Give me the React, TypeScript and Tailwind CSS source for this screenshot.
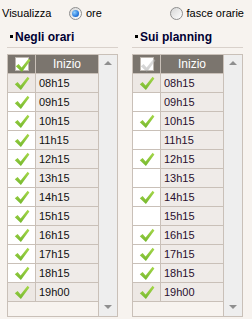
const TIMES = ['08h15', '09h15', '10h15', '11h15', '12h15', '13h15', '14h15', '15h15', '16h15', '17h15', '18h15', '19h00'];
const RIGHT_CHECKED = [true, false, true, false, true, false, true, false, true, true, true, true];

function Tick({ className = '' }: { className?: string }) {
  return (
    <svg width="16" height="15" viewBox="0 0 16 15" className={className}>
      <defs>
        <linearGradient id="tickg" x1="0" y1="0" x2="0" y2="1">
          <stop offset="0" stopColor="#a6d84a" />
          <stop offset="1" stopColor="#74b72e" />
        </linearGradient>
      </defs>
      <path d="M0.8 8.2 L3.6 6 L6.6 9.4 L13.6 0.8 L15.4 2.6 L6.9 14 Z" fill="url(#tickg)" />
    </svg>
  );
}

function Radio({ checked }: { checked: boolean }) {
  return (
    <span className="w-[13px] h-[13px] rounded-full border border-[#8e8e8e] bg-gradient-to-br from-[#d6d6d6] to-[#ffffff] flex items-center justify-center">
      {checked && <span className="w-[7px] h-[7px] rounded-full bg-[radial-gradient(circle_at_35%_35%,#8fd0ff,#1c6ed6_70%,#0e4fa8)]" />}
    </span>
  );
}

function Scrollbar() {
  return (
    <div className="w-[19px] border-l border-[#c9c0b8] bg-[#eeeeee] flex flex-col items-center justify-between pt-[6px] pb-[7px]">
      <span className="w-0 h-0 border-l-[4px] border-r-[4px] border-b-[4px] border-l-transparent border-r-transparent border-b-[#8f8f8f]" />
      <span className="w-0 h-0 border-l-[4px] border-r-[4px] border-t-[4px] border-l-transparent border-r-transparent border-t-[#8f8f8f]" />
    </div>
  );
}

function Panel({ title, checked, disabled, textColor }: { title: string; checked: boolean[]; disabled?: boolean; textColor: string }) {
  return (
    <div className="w-[111px] flex flex-col">
      <div className="h-[22px] flex items-center gap-[2px] pl-[3px] border-b border-[#d9d1cb]">
        <span className="w-[3px] h-[3px] bg-black" />
        <span className="text-[12px] font-bold text-[#000033]">{title}</span>
      </div>
      <div className="mt-[6px] h-[263px] border border-[#c9c0b8] flex">
        <div className="flex-1 flex flex-col">
          <div className="h-[19px] flex bg-[#7b756e] border-b border-[#c9c0b8]">
            <div className="w-[28px] border-r border-[#c9c0b8] flex items-center justify-center">
              <div className="relative w-[14px] h-[14px] border border-[#bdb7b0] bg-white">
                <Tick className={`absolute left-[-1px] top-[0px] ${disabled ? 'grayscale opacity-50' : ''}`} />
              </div>
            </div>
            <div className="flex-1 flex items-center justify-center text-[12px] text-white">Inizio</div>
          </div>
          {TIMES.map((t, i) => (
            <div key={t} className="h-[19px] flex border-b border-[#c9c0b8]">
              <div className={`w-[28px] border-r border-[#c9c0b8] flex items-center justify-center ${i === 0 || i === TIMES.length - 1 ? 'bg-[#ede8e4]' : 'bg-white'}`}>
                {checked[i] && <Tick />}
              </div>
              <div className="flex-1 bg-[#efebe8] flex items-center pl-[3px] text-[11px]" style={{ color: textColor }}>{t}</div>
            </div>
          ))}
        </div>
        <Scrollbar />
      </div>
    </div>
  );
}

export default function App() {
  return (
    <div className="w-[252px] h-[319px] bg-[#f7f3ef] font-['Liberation_Sans',Arial,sans-serif] overflow-hidden">
      <div className="h-[26px] flex items-center text-[11px] text-black">
        <span className="pl-[2px] w-[69px]">Visualizza</span>
        <Radio checked />
        <span className="ml-[4px]">ore</span>
        <span className="ml-auto flex items-center gap-[4px] pr-[8px]">
          <Radio checked={false} />
          <span>fasce orarie</span>
        </span>
      </div>
      <div className="flex gap-[14px] pl-[7px]">
        <Panel title="Negli orari" checked={TIMES.map(() => true)} textColor="#111111" />
        <Panel title="Sui planning" checked={RIGHT_CHECKED} disabled textColor="#2a0f2e" />
      </div>
    </div>
  );
}
